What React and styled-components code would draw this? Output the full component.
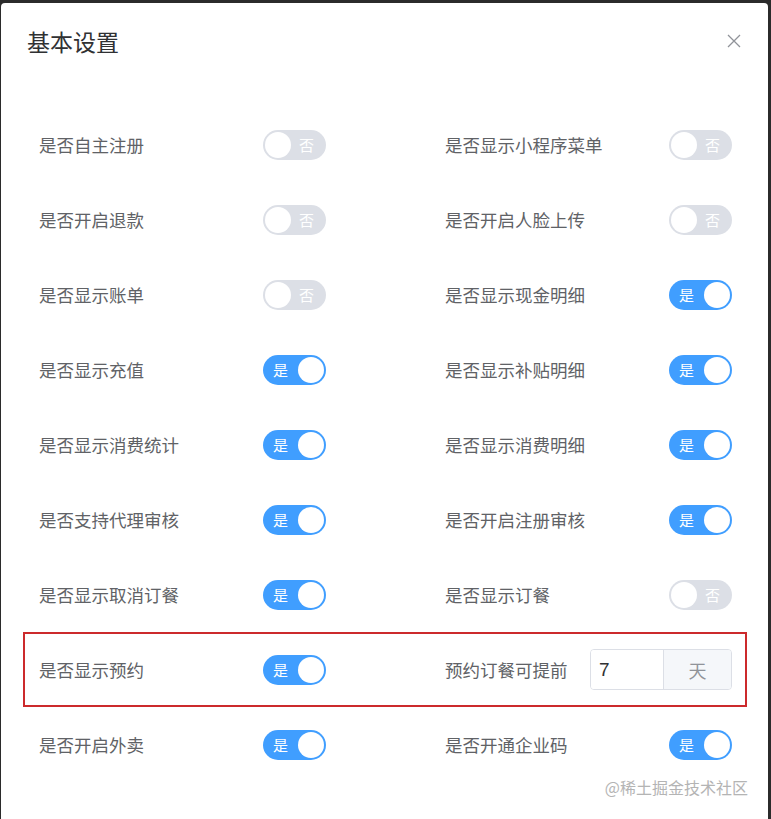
import React, { useState } from 'react';
import styled, { createGlobalStyle } from 'styled-components';

const GlobalStyle = createGlobalStyle`
  html, body {
    margin: 0;
    padding: 0;
    height: 100%;
    overflow: hidden;
  }
  body {
    background: #2b2b2b;
    font-family: "Noto Sans CJK SC", "Microsoft YaHei", sans-serif;
  }
`;

const Dialog = styled.div`
  position: relative;
  box-sizing: border-box;
  margin: 3px 3px 0 1px;
  height: 816px;
  background: #fff;
  border-radius: 4px 4px 0 0;
  overflow: hidden;
`;

const Header = styled.div`
  display: flex;
  justify-content: space-between;
  align-items: center;
  padding: 26px 26px 0 26px;
  height: 24px;
`;

const Title = styled.span`
  font-size: 23px;
  line-height: 24px;
  color: #303133;
`;

const CloseBtn = styled.button`
  border: none;
  background: none;
  padding: 0;
  width: 16px;
  height: 16px;
  display: flex;
  align-items: center;
  justify-content: center;
  cursor: pointer;
`;

const Body = styled.div`
  padding: 54px 21px 0 22px;
`;

const Row = styled.div`
  box-sizing: border-box;
  display: grid;
  grid-template-columns: 406px 1fr;
  align-items: center;
  height: 75px;
  padding-left: 14px;
  border: 2px solid ${({ marked }) => (marked ? '#cc2a2c' : 'transparent')};
`;

const Cell = styled.div`
  display: flex;
  align-items: center;
`;

const Label = styled.span`
  flex: 0 0 ${({ w }) => w || 224}px;
  font-size: 17.5px;
  color: #606266;
  line-height: 24px;
`;

const SwitchCore = styled.div`
  position: relative;
  width: 63px;
  height: 30px;
  border-radius: 15px;
  background: ${({ on }) => (on ? '#409eff' : '#dcdfe6')};
  cursor: pointer;
  transition: background 0.2s;
`;

const Knob = styled.span`
  position: absolute;
  top: 2px;
  left: ${({ on }) => (on ? '35px' : '2px')};
  width: 26px;
  height: 26px;
  border-radius: 50%;
  background: #fff;
  transition: left 0.2s;
`;

const SwitchText = styled.span`
  position: absolute;
  top: 0;
  line-height: 30px;
  font-size: 15px;
  color: #fff;
  left: ${({ on }) => (on ? '10px' : '36px')};
`;

const InputGroup = styled.div`
  display: flex;
  height: 39px;
  width: 140px;
  border: 1px solid #dcdfe6;
  border-radius: 4px;
  overflow: hidden;
`;

const Input = styled.input`
  box-sizing: border-box;
  width: 72px;
  border: none;
  outline: none;
  padding: 0 8px;
  font-size: 19px;
  color: #303133;
  font-family: "Liberation Sans", Arial, sans-serif;
`;

const Append = styled.div`
  flex: 1;
  display: flex;
  align-items: center;
  justify-content: center;
  background: #f5f7fa;
  border-left: 1px solid #dcdfe6;
  color: #909399;
  font-size: 18px;
`;

const Watermark = styled.div`
  position: absolute;
  right: 20px;
  bottom: 20px;
  font-size: 16px;
  color: #b4b4b4;
  pointer-events: none;
`;

const Switch = ({ value, onChange }) => (
  <SwitchCore on={value ? 1 : 0} onClick={() => onChange(!value)}>
    <SwitchText on={value ? 1 : 0}>{value ? '是' : '否'}</SwitchText>
    <Knob on={value ? 1 : 0} />
  </SwitchCore>
);

const initialRows = [
  [['是否自主注册', false], ['是否显示小程序菜单', false]],
  [['是否开启退款', false], ['是否开启人脸上传', false]],
  [['是否显示账单', false], ['是否显示现金明细', true]],
  [['是否显示充值', true], ['是否显示补贴明细', true]],
  [['是否显示消费统计', true], ['是否显示消费明细', true]],
  [['是否支持代理审核', true], ['是否开启注册审核', true]],
  [['是否显示取消订餐', true], ['是否显示订餐', false]],
  [['是否显示预约', true], null],
  [['是否开启外卖', true], ['是否开通企业码', true]],
];

export default function App() {
  const [rows, setRows] = useState(initialRows);
  const [days, setDays] = useState('7');

  const toggle = (r, c) => {
    const next = rows.map(row => row.map(cell => (cell ? [...cell] : cell)));
    next[r][c][1] = !next[r][c][1];
    setRows(next);
  };

  return (
    <>
      <GlobalStyle />
      <Dialog>
        <Header>
          <Title>基本设置</Title>
          <CloseBtn aria-label="close">
            <svg width="14" height="14" viewBox="0 0 14 14">
              <path d="M1 1L13 13M13 1L1 13" stroke="#909399" strokeWidth="1.3" fill="none" />
            </svg>
          </CloseBtn>
        </Header>
        <Body>
          {rows.map((row, r) => (
            <Row key={r} marked={r === 7}>
              {row.map((cell, c) =>
                cell ? (
                  <Cell key={c}>
                    <Label>{cell[0]}</Label>
                    <Switch value={cell[1]} onChange={() => toggle(r, c)} />
                  </Cell>
                ) : (
                  <Cell key={c}>
                    <Label w={145}>预约订餐可提前</Label>
                    <InputGroup>
                      <Input value={days} onChange={e => setDays(e.target.value)} />
                      <Append>天</Append>
                    </InputGroup>
                  </Cell>
                )
              )}
            </Row>
          ))}
        </Body>
        <Watermark>@稀土掘金技术社区</Watermark>
      </Dialog>
    </>
  );
}
